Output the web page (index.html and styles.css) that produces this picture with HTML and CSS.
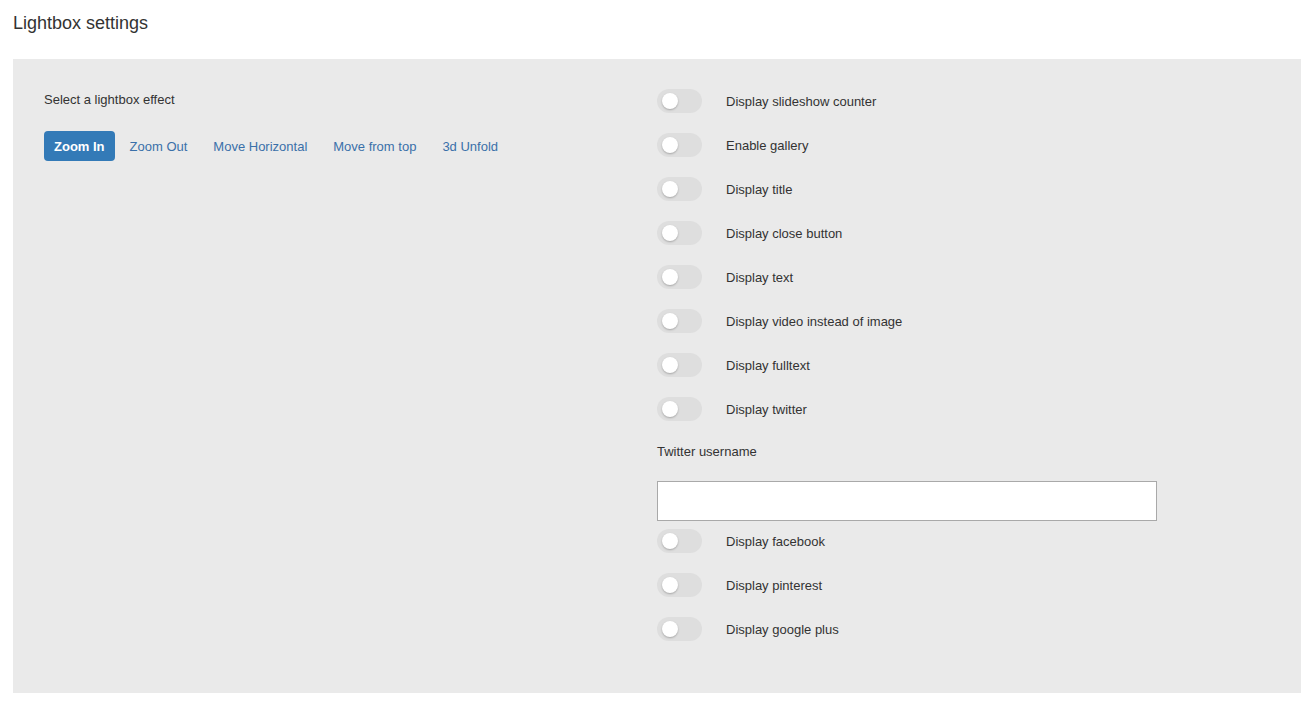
FILE: index.html
```html
<!DOCTYPE html>
<html>
<head lang="en">
  <meta charset="UTF-8">
  <title>Lightbox settings</title>
  <link rel="stylesheet" href="styles.css">
</head>
<body>
  <div class="page">
    <h2 class="title">Lightbox settings</h2>
    <div class="panel">
      <div class="col">
        <p class="label">Select a lightbox effect</p>
        <div class="effects">
          <button class="effect active">Zoom In</button>
          <button class="effect">Zoom Out</button>
          <button class="effect">Move Horizontal</button>
          <button class="effect">Move from top</button>
          <button class="effect">3d Unfold</button>
        </div>
      </div>
      <div class="col">
        <label class="row"><span class="switch"><i></i></span>Display slideshow counter</label>
        <label class="row"><span class="switch"><i></i></span>Enable gallery</label>
        <label class="row"><span class="switch"><i></i></span>Display title</label>
        <label class="row"><span class="switch"><i></i></span>Display close button</label>
        <label class="row"><span class="switch"><i></i></span>Display text</label>
        <label class="row"><span class="switch"><i></i></span>Display video instead of image</label>
        <label class="row"><span class="switch"><i></i></span>Display fulltext</label>
        <label class="row"><span class="switch"><i></i></span>Display twitter</label>
        <p class="label field-label">Twitter username</p>
        <input class="text" type="text">
        <label class="row"><span class="switch"><i></i></span>Display facebook</label>
        <label class="row"><span class="switch"><i></i></span>Display pinterest</label>
        <label class="row"><span class="switch"><i></i></span>Display google plus</label>
      </div>
    </div>
  </div>
</body>
</html>
```
FILE: styles.css
```css
* {
  margin: 0;
  padding: 0;
  box-sizing: border-box;
}
body {
  font-family: "Liberation Sans", Arial, sans-serif;
  font-size: 13px;
  color: #333;
  background: #fff;
}
.page {
  padding: 0 15px 0 13px;
}
.title {
  font-size: 18px;
  font-weight: normal;
  line-height: 20px;
  padding-top: 13px;
  margin-bottom: 26px;
  color: #333;
}
.panel {
  display: grid;
  grid-template-columns: 1fr 1fr;
  background: #eaeaea;
  padding: 30px 31px 32px 31px;
  height: 634px;
}
.label {
  line-height: 20px;
  margin-bottom: 21px;
}
.col > .label:first-child {
  margin-top: 1px;
}
.effects {
  display: flex;
  gap: 4px;
}
.effect {
  font-family: inherit;
  font-size: 13px;
  height: 30px;
  padding: 0 11px;
  border: none;
  border-radius: 4px;
  background: none;
  color: #3a70a9;
  cursor: pointer;
}
.effect.active {
  padding: 0 10px;
  background: #337ab7;
  color: #fff;
  font-weight: bold;
}
.row {
  display: flex;
  align-items: center;
  height: 24px;
  margin-bottom: 20px;
  cursor: pointer;
}
.switch {
  position: relative;
  width: 45px;
  height: 24px;
  border-radius: 12px;
  background: #dedede;
  margin-right: 24px;
  flex-shrink: 0;
}
.switch i {
  position: absolute;
  left: 5px;
  top: 4px;
  width: 16px;
  height: 16px;
  border-radius: 50%;
  background: #fff;
  box-shadow: 0 1px 2px rgba(0, 0, 0, 0.25);
}
.field-label {
  padding-top: 1px;
  margin-bottom: 19px;
}
.text {
  display: block;
  width: 500px;
  height: 40px;
  border: 1px solid #a9a9a9;
  background: #fff;
  margin-bottom: 8px;
}
```
